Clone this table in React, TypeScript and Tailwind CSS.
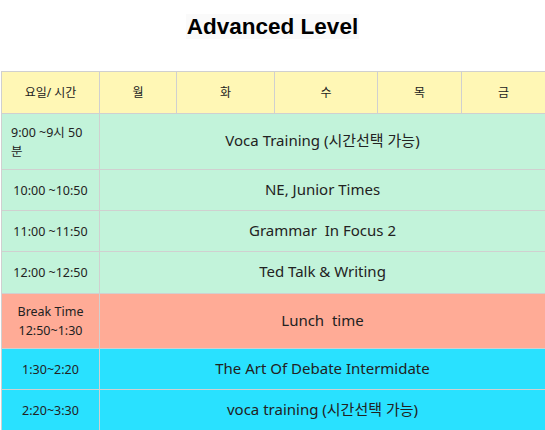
const days = ['월', '화', '수', '목', '금'];

type Row = {
  time: React.ReactNode;
  subject: string;
  bg: string;
  h: string;
  left?: boolean;
};

const rows: Row[] = [
  {
    time: '9:00 ~9시 50 분',
    subject: 'Voca Training (시간선택 가능)',
    bg: 'bg-[#c2f3da]',
    h: 'h-[56px]',
    left: true,
  },
  { time: '10:00 ~10:50', subject: 'NE, Junior Times', bg: 'bg-[#c2f3da]', h: 'h-[41px]' },
  { time: '11:00 ~11:50', subject: 'Grammar\u00a0 In Focus 2', bg: 'bg-[#c2f3da]', h: 'h-[41px]' },
  { time: '12:00 ~12:50', subject: 'Ted Talk & Writing', bg: 'bg-[#c2f3da]', h: 'h-[42px]' },
  {
    time: (
      <>
        Break Time
        <br />
        12:50~1:30
      </>
    ),
    subject: 'Lunch\u00a0 time',
    bg: 'bg-[#ffab96]',
    h: 'h-[55px]',
  },
  { time: '1:30~2:20', subject: 'The Art Of Debate Intermidate', bg: 'bg-[#29e1ff]', h: 'h-[41px]' },
  { time: '2:20~3:30', subject: 'voca training (시간선택 가능)', bg: 'bg-[#29e1ff]', h: 'h-[41px]' },
];

export default function App() {
  return (
    <div className="min-h-[430px] bg-white font-['Noto_Sans','Noto_Sans_CJK_KR',sans-serif] text-[#222]">
      <div className="h-[71px] pt-[14px] text-center">
        <h1 className="inline-block bg-[#fafafa] px-[1px] font-['Liberation_Sans',Arial,sans-serif] text-[22.5px] font-bold leading-[25px] text-black">
          Advanced Level
        </h1>
      </div>
      <table className="ml-px w-[544px] table-fixed border-collapse">
        <colgroup>
          <col className="w-[98px]" />
          <col className="w-[77px]" />
          <col className="w-[98px]" />
          <col className="w-[103px]" />
          <col className="w-[84px]" />
          <col className="w-[84px]" />
        </colgroup>
        <thead>
          <tr className="h-[42px] bg-[#fff7b5]">
            <th className="border border-[#d0d0d0] text-[12px] font-normal">요일/ 시간</th>
            {days.map(d => (
              <th key={d} className="border border-[#d0d0d0] text-[12px] font-normal">
                {d}
              </th>
            ))}
          </tr>
        </thead>
        <tbody>
          {rows.map((r, i) => (
            <tr key={i} className={`${r.h} ${r.bg}`}>
              <td
                className={`border border-[#d0d0d0] text-[12.5px] leading-[19px] ${
                  r.left ? 'pl-[9px] pr-[6px] text-left' : 'text-center'
                }`}
              >
                {r.time}
              </td>
              <td colSpan={5} className="border border-[#d0d0d0] pb-[2px] text-center text-[15px]">
                {r.subject}
              </td>
            </tr>
          ))}
        </tbody>
      </table>
    </div>
  );
}
